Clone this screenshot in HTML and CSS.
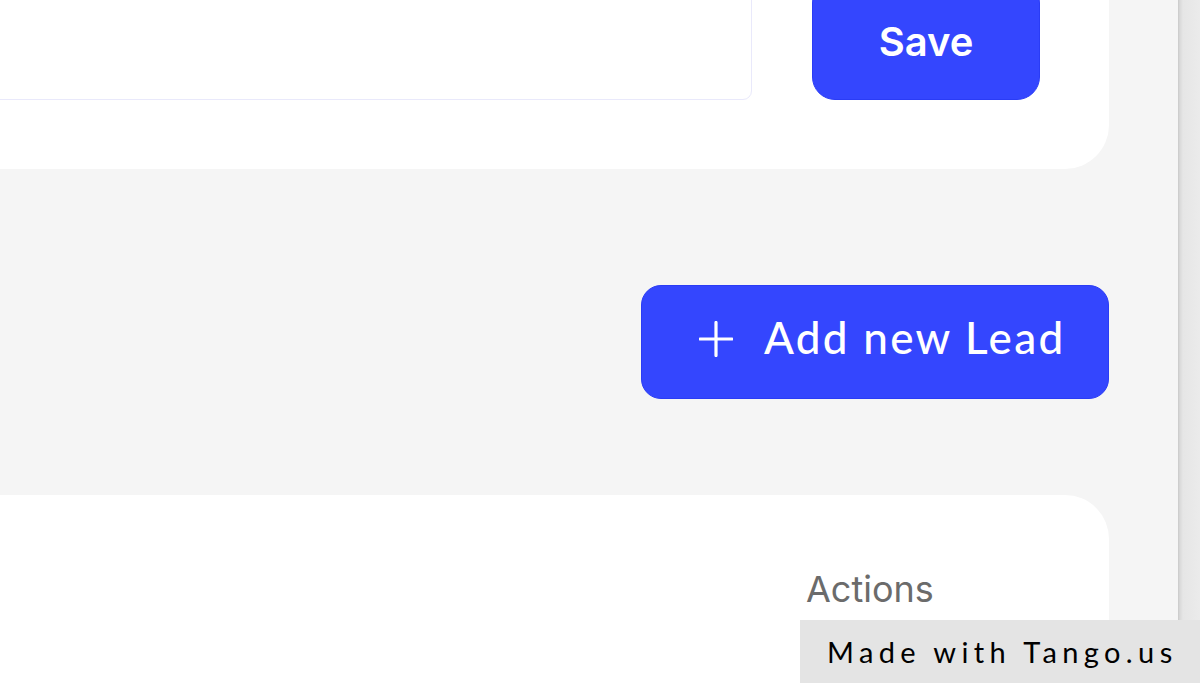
FILE: index.html
```html
<!DOCTYPE html>
<html>
<head>
<meta charset="utf-8">
<link rel="stylesheet" href="styles.css">
</head>
<body>
<div class="page">
  <main class="main">
    <section class="top-card">
      <div class="field"></div>
      <button class="save-btn">Save</button>
    </section>
    <div class="toolbar">
      <button class="add-btn">
        <svg class="plus" width="34" height="36" viewBox="0 0 34 36"><path d="M17 1.5V34.5M1 18H33" stroke="#fff" stroke-width="3.2" stroke-linecap="round"/></svg>
        <span>Add new Lead</span>
      </button>
    </div>
    <section class="table-card">
      <div class="th">Actions</div>
    </section>
  </main>
  <div class="scrollbar"></div>
</div>
<div class="tango">Made with Tango.us</div>
</body>
</html>
```

FILE: styles.css
```css
* { box-sizing: border-box; }
html, body { margin: 0; padding: 0; }
body {
  width: 1200px;
  height: 683px;
  overflow: hidden;
  background: #f5f5f5;
  font-family: "Inter", "Liberation Sans", sans-serif;
}
.page {
  display: flex;
  height: 683px;
}
.main {
  flex: 1;
  display: flex;
  flex-direction: column;
  padding-right: 69px;
}
.top-card {
  height: 169px;
  background: #fff;
  border-bottom-right-radius: 44px;
  display: flex;
  align-items: flex-start;
  gap: 60px;
  overflow: hidden;
}
.field {
  width: 762px;
  height: 120px;
  margin-top: -20px;
  margin-left: -10px;
  border: 1.5px solid #e9e9fb;
  border-radius: 9px;
  background: #fff;
}
.save-btn {
  width: 228px;
  height: 120px;
  margin-top: -20px;
  padding: 4px 0 0;
  border: 1px solid #2a3cf5;
  border-radius: 23px;
  background: #3446fe;
  color: #fff;
  font-family: "Inter", "Liberation Sans", sans-serif;
  font-weight: 600;
  font-size: 40px;
  line-height: 1;
}
.toolbar {
  display: flex;
  justify-content: flex-end;
  margin-top: 116px;
}
.add-btn {
  width: 468px;
  height: 114px;
  border: 1px solid #2a3cf5;
  border-radius: 20px;
  background: #3446fe;
  color: #fff;
  display: flex;
  align-items: center;
  padding: 0 0 6px 57px;
  gap: 31px;
  font-family: "Lato", "Open Sans", sans-serif;
  font-weight: 500;
  font-size: 44px;
  letter-spacing: 2.3px;
}
.add-btn span { position: relative; top: -2px; }
.plus { flex: none; }
.table-card {
  flex: 1;
  margin-top: 96px;
  background: #fff;
  border-top-right-radius: 44px;
  padding: 76px 0 0 806px;
}
.th {
  font-size: 36px;
  color: #6b6b6b;
  line-height: 1;
}
.scrollbar {
  width: 22px;
  height: 620px;
  background: linear-gradient(to right, #c9c9c9 0, #dadada 2px, #e6e6e6 5px, #ebebeb 100%);
}
.tango {
  position: absolute;
  left: 800px;
  top: 620px;
  width: 400px;
  height: 63px;
  background: #e4e4e4;
  color: #000;
  font-family: "Lato", "Liberation Sans", sans-serif;
  font-size: 29px;
  letter-spacing: 5.4px;
  padding-left: 27px;
  line-height: 63px;
  white-space: nowrap;
}
```
